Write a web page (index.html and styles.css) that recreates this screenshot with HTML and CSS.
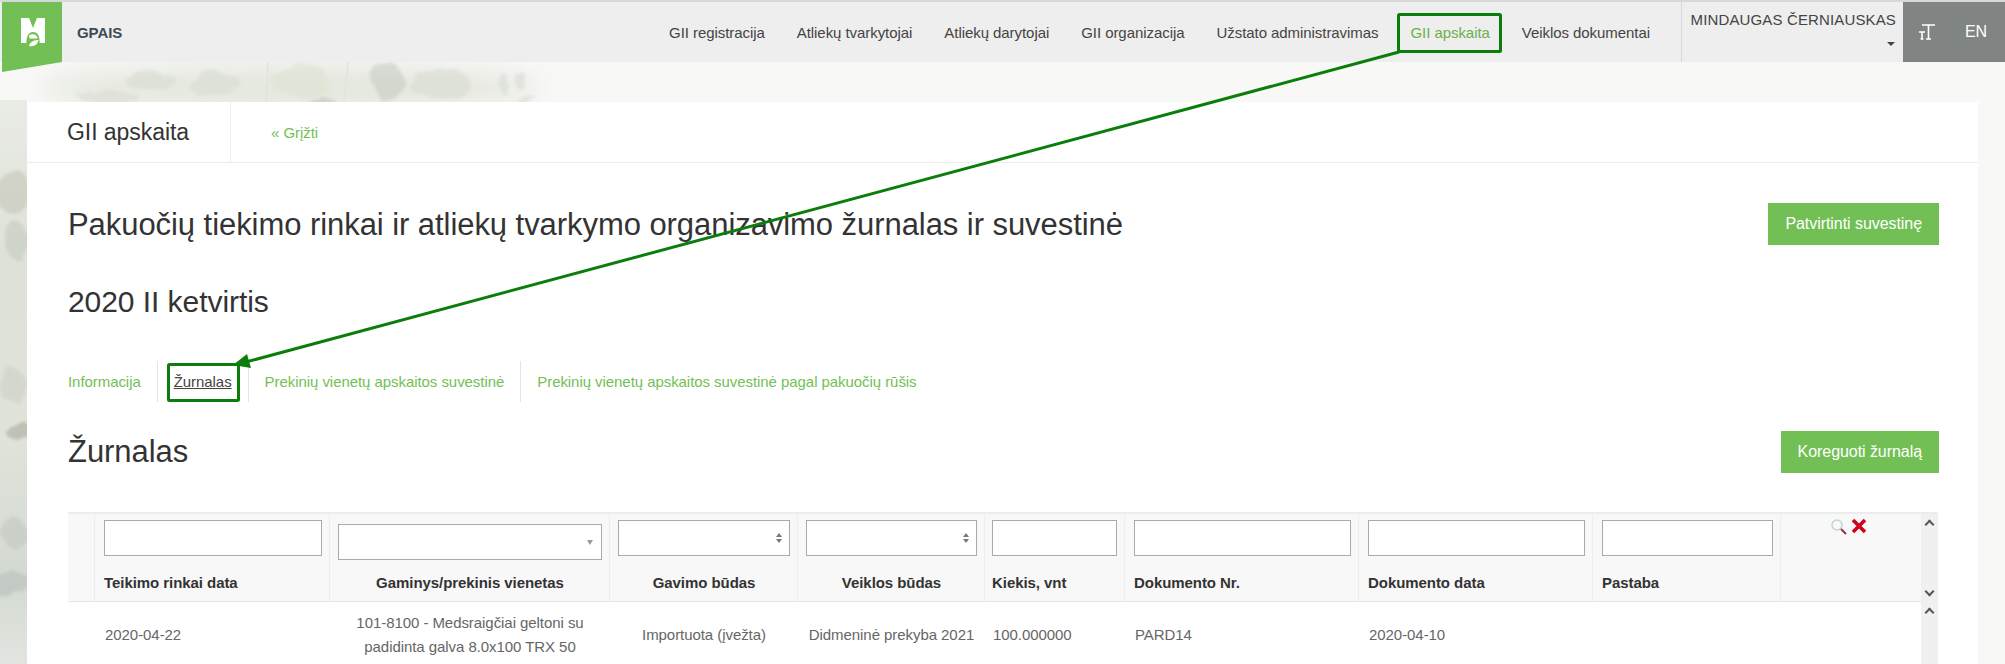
FILE: index.html
```html
<!DOCTYPE html>
<html lang="en">
<head>
  <meta charset="UTF-8" />
  <title>GPAIS - GII apskaita</title>
  <link rel="stylesheet" href="styles.css">
</head>
<body>

  <!-- watercolour leaves behind the page -->
  <svg class="backdrop" width="2005" height="664" viewBox="0 0 2005 664">
    <defs>
      <filter id="wash" x="-20%" y="-20%" width="140%" height="140%">
        <feTurbulence type="fractalNoise" baseFrequency="0.035" numOctaves="4" seed="7" />
        <feDisplacementMap in="SourceGraphic" scale="16" />
        <feGaussianBlur stdDeviation="1.6" />
      </filter>
      <filter id="soft"><feGaussianBlur stdDeviation="12" /></filter>
      <linearGradient id="column" x1="0" y1="0" x2="0" y2="1">
        <stop offset="0" stop-color="#e9ebe5" />
        <stop offset="0.3" stop-color="#dde1d7" />
        <stop offset="0.6" stop-color="#dfe3da" />
        <stop offset="0.85" stop-color="#d3d9d2" />
        <stop offset="1" stop-color="#e2e5df" />
      </linearGradient>
    </defs>
    <rect x="0" y="100" width="27" height="564" fill="url(#column)" />
    <g filter="url(#soft)">
      <ellipse cx="290" cy="88" rx="250" ry="24" fill="#e5e8df" />
    </g>
    <g filter="url(#wash)" fill="#d8dcd1" opacity="0.6">
      <ellipse cx="110" cy="98" rx="30" ry="7" />
      <ellipse cx="150" cy="80" rx="26" ry="10" />
      <ellipse cx="215" cy="84" rx="26" ry="14" />
      <ellipse cx="300" cy="80" rx="30" ry="16" fill="#dfe4d4" />
      <ellipse cx="388" cy="82" rx="15" ry="20" fill="#c6cdc4" />
      <ellipse cx="440" cy="84" rx="32" ry="14" />
      <ellipse cx="504" cy="84" rx="5" ry="11" />
      <ellipse cx="520" cy="80" rx="5" ry="10" />
      <ellipse cx="525" cy="99" rx="12" ry="3" />
      <ellipse cx="320" cy="100" rx="14" ry="4" fill="#bfc5ba" />
      <ellipse cx="14" cy="192" rx="18" ry="22" fill="#c4c7b5" />
      <ellipse cx="16" cy="240" rx="12" ry="18" fill="#c6cbc3" />
      <ellipse cx="18" cy="430" rx="13" ry="10" fill="#a9ab9a" />
      <ellipse cx="12" cy="385" rx="14" ry="16" fill="#cdd1c8" />
      <ellipse cx="16" cy="535" rx="12" ry="14" fill="#c3c8c2" />
      <ellipse cx="10" cy="585" rx="24" ry="12" fill="#b9bfba" />
    </g>
    <path d="M268 62 L266 102 M348 62 L344 102" stroke="#e2e4dd" stroke-width="2" />
  </svg>

  <header class="topbar">
    <div class="brand">
      <svg class="logo" width="60" height="70" viewBox="0 0 60 70">
        <polygon points="0,0 60,0 60,60 0,70" fill="#72bf55" />
        <path d="M19 16 H27 L31 26 L35 16 H43 V41 H19 Z" fill="#fff" />
        <path d="M24.500 42 C24 35 26 30 31 30 C36 30 38 34 37.500 42" fill="#72bf55" />
        <path d="M27 33.500 C30 31.500 34 32 35.500 35.500 L35.500 36.500 L27.500 36.500 Z" fill="#fff" />
        <ellipse cx="32" cy="42" rx="6" ry="3.500" fill="#72bf55" />
        <path d="M27 44 C28 39 33 38 36.500 38 C36 42 32 45 27 44 Z" fill="#fff" />
      </svg>
      <span class="brand-name">GPAIS</span>
    </div>
    <nav class="mainnav">
      <a href="#">GII registracija</a>
      <a href="#">Atliekų tvarkytojai</a>
      <a href="#">Atliekų darytojai</a>
      <a href="#">GII organizacija</a>
      <a href="#">Užstato administravimas</a>
      <a href="#" class="active">GII apskaita</a>
      <a href="#">Veiklos dokumentai</a>
    </nav>
    <div class="user">
      <span>MINDAUGAS ČERNIAUSKAS</span>
      <i class="caret"></i>
    </div>
    <div class="tools">
      <svg width="16" height="16" viewBox="0 0 16 16">
        <path d="M3 1 H16 M9.500 1 V15 M7 15 H12 M0 8 H6 M3 8 V15 M1.500 15 H4.500" fill="none" stroke="#fff" stroke-width="1.600" />
      </svg>
      <span>EN</span>
    </div>
  </header>

  <main class="panel">
    <div class="panel-head">
      <div class="panel-title">GII apskaita</div>
      <a href="#" class="back">« Grįžti</a>
    </div>

    <div class="panel-body">
      <div class="title-row">
        <h1>Pakuočių tiekimo rinkai ir atliekų tvarkymo organizavimo žurnalas ir suvestinė</h1>
        <a href="#" class="btn">Patvirtinti suvestinę</a>
      </div>
      <h2 class="quarter">2020 II ketvirtis</h2>

      <div class="tabs">
        <a href="#">Informacija</a>
        <a href="#" class="current">Žurnalas</a>
        <a href="#">Prekinių vienetų apskaitos suvestinė</a>
        <a href="#">Prekinių vienetų apskaitos suvestinė pagal pakuočių rūšis</a>
      </div>

      <div class="section-row">
        <h2>Žurnalas</h2>
        <a href="#" class="btn">Koreguoti žurnalą</a>
      </div>

      <div class="grid">
        <div class="grid-head">
          <div class="cols">
            <div class="cell gutter"></div>
            <div class="cell"><input type="text" /><b>Teikimo rinkai data</b></div>
            <div class="cell center"><div class="fake-select low"><i class="arrow"></i></div><b>Gaminys/prekinis vienetas</b></div>
            <div class="cell center"><div class="fake-select"><i class="updown"></i></div><b>Gavimo būdas</b></div>
            <div class="cell center"><div class="fake-select"><i class="updown"></i></div><b>Veiklos būdas</b></div>
            <div class="cell qty"><input type="text" /><b>Kiekis, vnt</b></div>
            <div class="cell"><input type="text" /><b>Dokumento Nr.</b></div>
            <div class="cell"><input type="text" /><b>Dokumento data</b></div>
            <div class="cell"><input type="text" /><b>Pastaba</b></div>
            <div class="cell actions">
              <svg width="18" height="18" viewBox="0 0 18 18">
                <circle cx="7" cy="7" r="5" fill="none" stroke="#bcd6d2" stroke-width="1.5" />
                <path d="M11 11 L16 16" stroke="#8a3a3a" stroke-width="2" />
              </svg>
              <svg width="16" height="16" viewBox="0 0 16 16">
                <path d="M2 2 L14 14 M14 2 L2 14" stroke="#d0021b" stroke-width="3.6" />
              </svg>
            </div>
          </div>
          <div class="scrollbar">
            <i class="chev up"></i>
            <i class="chev down"></i>
          </div>
        </div>
        <div class="grid-body">
          <div class="cols">
            <div class="cell gutter"></div>
            <div class="cell">2020-04-22</div>
            <div class="cell center product">101-8100 - Medsraigčiai geltoni su padidinta galva 8.0x100 TRX 50</div>
            <div class="cell center">Importuota (įvežta)</div>
            <div class="cell center">Didmeninė prekyba 2021</div>
            <div class="cell qty">100.000000</div>
            <div class="cell">PARD14</div>
            <div class="cell">2020-04-10</div>
            <div class="cell"></div>
            <div class="cell"></div>
          </div>
          <div class="scrollbar">
            <i class="chev up"></i>
          </div>
        </div>
      </div>
    </div>
  </main>

  <!-- callout arrow and boxes drawn over the screenshot -->
  <svg class="callout" width="2005" height="664" viewBox="0 0 2005 664">
    <rect x="1398.5" y="14.5" width="102" height="37" rx="1" fill="none" stroke="#0b7d0b" stroke-width="3" />
    <rect x="168.5" y="364.5" width="70" height="36" rx="1" fill="none" stroke="#0b7d0b" stroke-width="3" />
    <path d="M1399 52 L246 362" stroke="#0b7d0b" stroke-width="3" />
    <polygon points="233,365 247,354 251,368" fill="#0b7d0b" />
  </svg>

</body>
</html>
```

FILE: styles.css
```css
* {
  box-sizing: border-box;
}

html, body {
  height: 664px;
  overflow: hidden;
}

body {
  position: relative;
  margin: 0;
  background-color: #f8f8f7;
  color: #333;
  font-family: "Liberation Sans", Arial, sans-serif;
  font-size: 15px;
  letter-spacing: -0.06px;
}

a {
  text-decoration: none;
}

.backdrop, .callout {
  position: absolute;
  top: 0;
  left: 0;
}

.backdrop {
  z-index: 0;
}

.callout {
  z-index: 5;
}

.topbar {
  position: relative;
  z-index: 2;
  display: flex;
  height: 62px;
  background-color: #eeeeee;
  border-top: 2px solid #d8d8d8;
}

.brand {
  display: flex;
  align-items: center;
  flex: 1;
  padding-left: 2px;
}

.logo {
  align-self: flex-start;
  flex: none;
}

.brand-name {
  margin-left: 15px;
  font-weight: bold;
  color: #3f4a54;
}

.mainnav {
  display: flex;
  align-items: center;
  gap: 32px;
  padding-right: 31px;
}

.mainnav a {
  color: #444;
}

.mainnav a.active {
  color: #6ab04c;
}

.user {
  display: flex;
  flex-direction: column;
  align-items: flex-end;
  width: 222px;
  padding: 9px 7px 0 7px;
  border-left: 1px solid #d8d8d8;
  color: #444;
  letter-spacing: 0.14px;
  white-space: nowrap;
}

.caret {
  margin-top: 14px;
  margin-right: 1px;
  border-top: 4px solid #444;
  border-left: 4px solid transparent;
  border-right: 4px solid transparent;
}

.tools {
  display: flex;
  align-items: center;
  gap: 30px;
  width: 102px;
  padding-left: 16px;
  background-color: #808584;
  color: #fff;
  font-size: 16px;
}

.panel {
  position: relative;
  z-index: 1;
  width: 1951px;
  margin: 40px 0 0 27px;
  background-color: #fff;
}

.panel-head {
  display: flex;
  align-items: center;
  height: 61px;
  border-bottom: 1px solid #ececec;
}

.panel-title {
  display: flex;
  align-items: center;
  width: 204px;
  height: 100%;
  padding-left: 40px;
  border-right: 1px solid #ececec;
  font-size: 23px;
}

.back {
  margin-left: 40px;
  color: #72bf55;
}

.panel-body {
  padding: 0 39px 0 41px;
}

.title-row, .section-row {
  display: flex;
  align-items: center;
  justify-content: space-between;
}

.title-row {
  height: 81px;
  margin-top: 20px;
}

h1, h2 {
  margin: 0;
  font-weight: normal;
}

h1 {
  padding-top: 2px;
  font-size: 31px;
}

.quarter {
  margin-top: 21px;
  font-size: 30px;
}

.section-row h2 {
  font-size: 31px;
}

.btn {
  padding: 12px 17px;
  background-color: #72bf55;
  color: #fff;
  font-size: 16px;
}

.tabs {
  display: flex;
  height: 41px;
  margin-top: 42px;
}

.tabs a {
  display: flex;
  align-items: center;
  padding: 0 16px;
  border-left: 1px solid #e4e4e4;
  color: #72bf55;
}

.tabs a:first-child {
  padding-left: 0;
  border-left: none;
}

.tabs a.current {
  color: #444;
  text-decoration: underline;
}

.section-row {
  height: 42px;
  margin-top: 29px;
}

.grid {
  width: 1870px;
  margin-top: 39px;
  border-top: 2px solid #ececec;
}

.grid-head, .grid-body {
  display: flex;
}

.cols {
  display: grid;
  grid-template-columns: 27px 235px 280px 188px 187px 140px 234px 234px 188px 140px;
  width: 1853px;
}

.grid-head .cols {
  height: 88px;
  background-color: #f8f8f8;
  border-bottom: 1px solid #e6e6e6;
}

.grid-head .cell {
  display: flex;
  flex-direction: column;
  justify-content: flex-end;
  padding: 6px 7px 0 9px;
  border-right: 1px solid #eeeeee;
}

.grid-head .cell.center {
  align-items: center;
  padding-left: 8px;
}

.grid-head .cell.qty {
  padding-left: 7px;
}

.grid-head .cell b {
  height: 38px;
  line-height: 38px;
  color: #333;
}

.grid input, .fake-select {
  display: block;
  width: 100%;
  height: 36px;
  padding: 0 6px;
  border: 1px solid #a9a9a9;
  background-color: #fff;
  border-radius: 0;
}

.fake-select {
  position: relative;
  flex: none;
  margin-bottom: 8px;
}

.fake-select.low {
  margin-bottom: 4px;
}

.arrow {
  position: absolute;
  top: 15px;
  right: 8px;
  border-top: 5px solid #999;
  border-left: 3px solid transparent;
  border-right: 3px solid transparent;
}

.updown::before, .updown::after {
  content: "";
  position: absolute;
  right: 7px;
  border-left: 3px solid transparent;
  border-right: 3px solid transparent;
}

.updown::before {
  top: 12px;
  border-bottom: 4px solid #777;
}

.updown::after {
  top: 18px;
  border-top: 4px solid #777;
}

.grid-head .cell input {
  flex: none;
  margin-bottom: 8px;
}

.grid-head .cell.actions {
  flex-direction: row;
  align-items: flex-start;
  justify-content: flex-start;
  gap: 3px;
  padding: 4px 0 0 49px;
  border-right: none;
}

.scrollbar {
  position: relative;
  flex: none;
  width: 17px;
  background-color: #f0f0f0;
}

.chev {
  position: absolute;
  left: 5px;
  width: 7px;
  height: 7px;
  border-top: 2px solid #555;
  border-left: 2px solid #555;
  transform: rotate(45deg);
}

.chev.up {
  top: 7px;
}

.chev.down {
  bottom: 7px;
  transform: rotate(225deg);
}

.grid-body .cols {
  min-height: 66px;
}

.grid-body .cell {
  display: flex;
  align-items: center;
  padding: 0 9px 0 10px;
  color: #666;
  line-height: 24px;
}

.grid-body .cell.center {
  justify-content: center;
  text-align: center;
  padding: 0 9px;
}

.grid-body .cell.qty {
  padding-left: 8px;
}

.grid-body .cell.product {
  padding: 0 20px;
}
```
